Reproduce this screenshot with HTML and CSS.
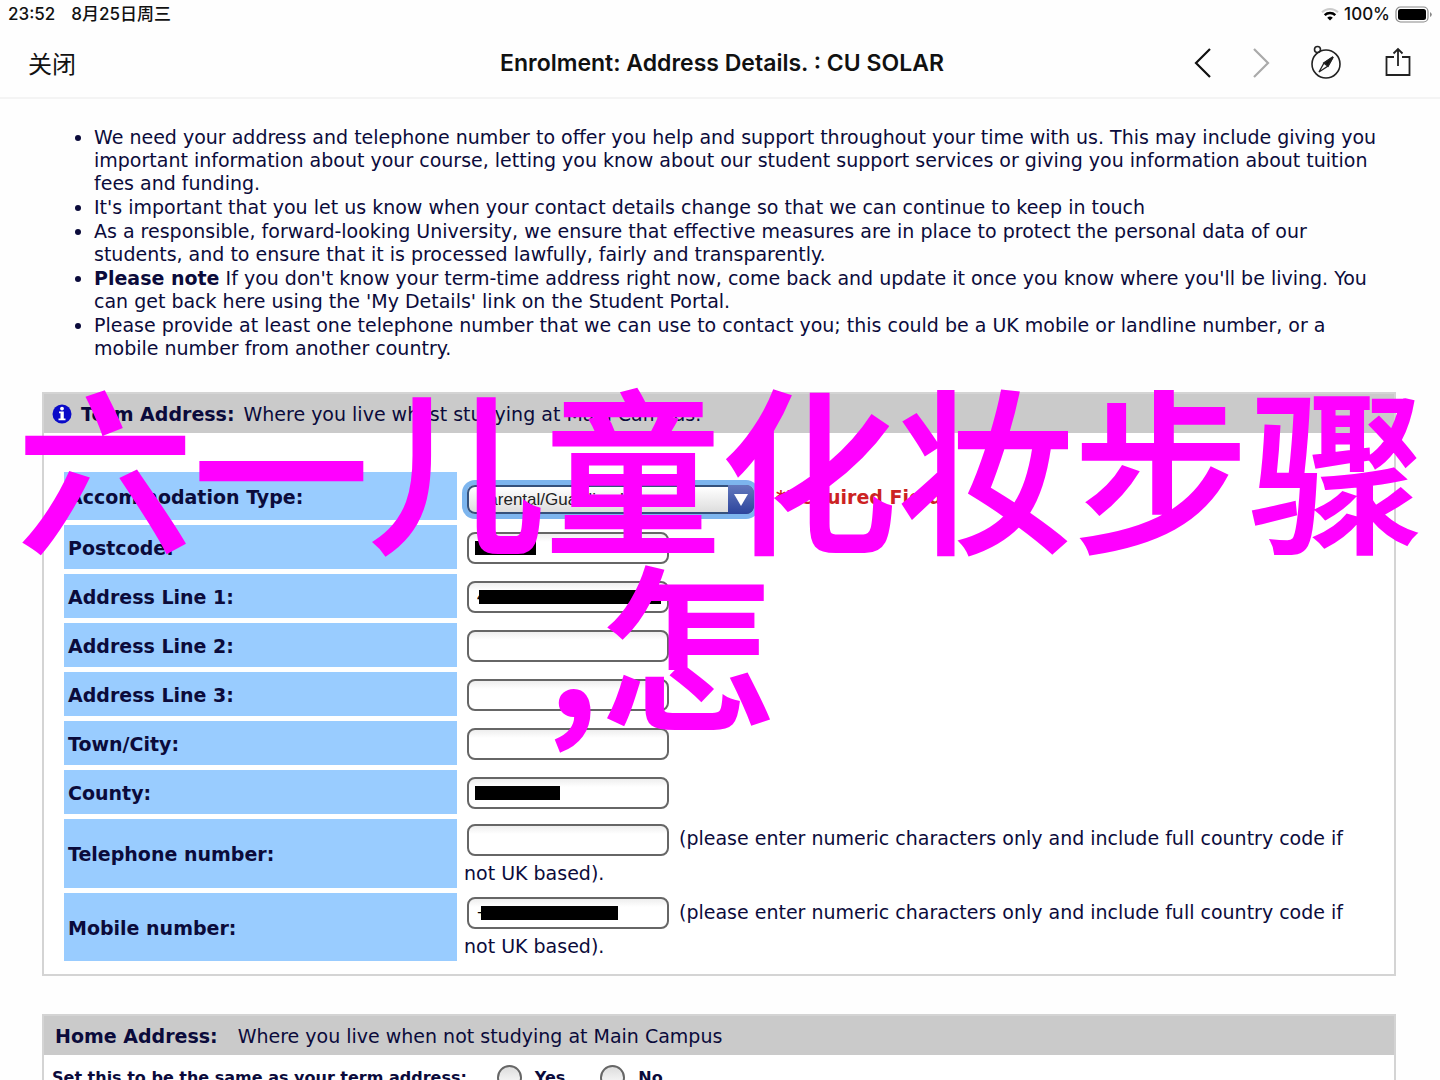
FILE: index.html
```html
<!DOCTYPE html>
<html lang="en">
<head>
  <meta charset="UTF-8">
  <title>Enrolment: Address Details. : CU SOLAR</title>
  <link rel="stylesheet" href="styles.css">
</head>
<body>
  <div class="status-bar">
    <div class="status-left" lang="zh"><span>23:52</span><span>8月25日周三</span></div>
    <div class="status-right">
      <svg width="18" height="14" viewBox="0 0 18 14" fill="none" stroke-width="2">
        <path d="M1 5.2a11.5 11.5 0 0 1 16 0" stroke="#ccc"/>
        <path d="M3.7 8.2a7.6 7.6 0 0 1 10.6 0" stroke="#000" stroke-width="2.4"/>
        <path d="M9 13.6l-2.8-2.8a4 4 0 0 1 5.6 0z" fill="#000"/>
      </svg>
      <span>100%</span>
      <svg width="37" height="17" viewBox="0 0 37 17">
        <rect x="1" y="1" width="32" height="15" rx="4.5" fill="none" stroke="#888" stroke-width="1.2"/>
        <rect x="3" y="3" width="28" height="11" rx="2.5"/>
        <path d="M35 6v5q1.8-1 1.8-2.5t-1.8-2.5z" fill="#888"/>
      </svg>
    </div>
  </div>

  <header class="nav-bar">
    <button class="close" lang="zh">关闭</button>
    <h1>Enrolment: Address Details. : CU SOLAR</h1>
    <div class="nav-icons">
      <button aria-label="Back">
        <svg width="22" height="36" viewBox="7 0 22 36" fill="none" stroke="#111" stroke-width="2.2"><path d="M25 4L11 18l14 14"/></svg>
      </button>
      <button aria-label="Forward">
        <svg width="22" height="36" viewBox="7 0 22 36" fill="none" stroke="#aaa" stroke-width="2.2"><path d="M11 4l14 14-14 14"/></svg>
      </button>
      <button aria-label="Open in browser">
        <svg width="36" height="36" viewBox="0 0 36 36" fill="none" stroke="#222" stroke-width="1.6">
          <circle cx="18" cy="19" r="14"/>
          <circle cx="9.5" cy="4.5" r="3"/>
          <path d="M25 12l-5 9-9 6 5-9z" stroke-width="1.3"/>
          <path d="M25 12l-5 9-4-3z" fill="#111"/>
        </svg>
      </button>
      <button aria-label="Share">
        <svg width="36" height="36" viewBox="0 0 36 36" fill="none" stroke="#222" stroke-width="1.8">
          <path d="M14 12H6.5v18h23V12H22M18 21V4M13.5 8.5L18 4l4.5 4.5"/>
        </svg>
      </button>
    </div>
  </header>

  <main>
    <ul class="notes">
      <li>We need your address and telephone number to offer you help and support throughout your time with us. This may include giving you important information about your course, letting you know about our student support services or giving you information about tuition fees and funding.</li>
      <li>It's important that you let us know when your contact details change so that we can continue to keep in touch</li>
      <li>As a responsible, forward-looking University, we ensure that effective measures are in place to protect the personal data of our students, and to ensure that it is processed lawfully, fairly and transparently.</li>
      <li><b>Please note</b> If you don't know your term-time address right now, come back and update it once you know where you'll be living. You can get back here using the 'My Details' link on the Student Portal.</li>
      <li>Please provide at least one telephone number that we can use to contact you; this could be a UK mobile or landline number, or a mobile number from another country.</li>
    </ul>

    <section class="panel">
      <h2 class="panel-title">
        <svg width="20" height="20" viewBox="0 0 20 20">
          <circle cx="10" cy="10" r="9.5" fill="#0a0ac8"/>
          <circle cx="10" cy="4.6" r="1.9" fill="#fff"/>
          <path d="M7 7.5h4.8v7h1.7v1.8h-7v-1.800h2V9.3H7z" fill="#fff"/>
        </svg>
        <b>Term Address:</b> <span>Where you live whilst studying at Main Campus.</span>
      </h2>
      <form class="fields">
        <label class="tall" for="accommodation">Accommodation Type:</label>
        <div class="field">
          <span class="select-wrap">
            <select id="accommodation"><option>Parental/Guardian Home</option></select>
            <span class="arrow"></span>
          </span>
          <span class="required">*Required Field</span>
        </div>
        <label for="postcode">Postcode:</label>
        <div class="field"><span class="box"><input type="text" id="postcode"><i class="mask mask-postcode"></i></span></div>
        <label for="address1">Address Line 1:</label>
        <div class="field"><span class="box"><input type="text" id="address1" value="4"><i class="mask mask-address"></i></span></div>
        <label for="address2">Address Line 2:</label>
        <div class="field"><span class="box"><input type="text" id="address2"></span></div>
        <label for="address3">Address Line 3:</label>
        <div class="field"><span class="box"><input type="text" id="address3"></span></div>
        <label for="town">Town/City:</label>
        <div class="field"><span class="box"><input type="text" id="town"></span></div>
        <label for="county">County:</label>
        <div class="field"><span class="box"><input type="text" id="county"><i class="mask mask-county"></i></span></div>
        <label for="telephone">Telephone number:</label>
        <div class="field"><p><span class="box"><input type="text" id="telephone"></span> (please enter numeric characters only and include full country code if not UK based).</p></div>
        <label for="mobile">Mobile number:</label>
        <div class="field"><p><span class="box"><input type="text" id="mobile" value="+"><i class="mask mask-mobile"></i></span> (please enter numeric characters only and include full country code if not UK based).</p></div>
      </form>
    </section>

    <section class="panel">
      <h2 class="panel-title home"><b>Home Address:</b> <span>Where you live when not studying at Main Campus</span></h2>
      <form class="same">
        <b>Set this to be the same as your term address:</b>
        <label><input type="radio" name="same"> Yes</label>
        <label><input type="radio" name="same"> No</label>
      </form>
    </section>
  </main>

  <div class="caption" lang="zh">
    <div>六一儿童化妆步骤</div>
    <div class="caption-end">,怎</div>
  </div>
</body>
</html>
```
FILE: styles.css
```css
* {
  box-sizing: border-box;
}
body {
  margin: 0;
  height: 100vh;
  overflow: hidden;
  position: relative;
  background: #fefefe;
  color: #0b0b3b;
  font-family: "DejaVu Sans", sans-serif;
  font-size: 19px;
}
button {
  padding: 0;
  border: 0;
  background: none;
  font: inherit;
  color: inherit;
  display: flex;
}
.status-bar {
  display: flex;
  justify-content: space-between;
  height: 28px;
  padding: 0 8px;
  color: #111;
  font-family: Inter, "Noto Sans CJK SC", sans-serif;
  font-size: 17px;
  font-weight: 500;
  line-height: 28px;
}
.status-left,
.status-right {
  display: flex;
  align-items: center;
}
.status-left {
  align-items: baseline;
  gap: 16px;
}
.status-right {
  gap: 5px;
}
.nav-bar {
  display: grid;
  grid-template-columns: 1fr auto 1fr;
  align-items: center;
  height: 71px;
  padding: 0 24px 0 28px;
  border-bottom: 2px solid #f4f4f4;
  color: #111;
  font-family: Inter, "Noto Sans CJK SC", sans-serif;
}
.nav-bar h1 {
  margin: 0;
  font-size: 23px;
  font-weight: 600;
}
.close {
  font-size: 24px;
}
.nav-icons {
  display: flex;
  justify-content: flex-end;
  gap: 36px;
}
main {
  padding: 27px 44px 0 42px;
}
.notes {
  margin: 0 0 32px;
  padding: 0 6px 0 52px;
  line-height: 23px;
}
.notes li {
  margin-bottom: 1px;
}
.panel {
  margin-bottom: 38px;
  border: 2px solid #d4d4d4;
  background: #fff;
}
.panel-title {
  display: flex;
  align-items: center;
  gap: 9px;
  height: 39px;
  margin: 0;
  padding: 0 8px;
  background: #cacaca;
  font-size: 19px;
  font-weight: normal;
}
.panel-title.home {
  gap: 20px;
  padding: 0 11px;
}
.fields {
  display: grid;
  grid-template-columns: 30% 1fr;
  grid-auto-rows: minmax(44px, auto);
  row-gap: 5px;
  padding: 39px 20px 13px;
}
.fields label {
  display: flex;
  align-items: center;
  padding: 2px 0 0 4px;
  background: #9cf;
  font-weight: bold;
}
.fields .tall {
  min-height: 48px;
}
.field {
  display: flex;
  align-items: center;
  padding: 2px 0 0 7px;
}
.field p {
  margin: 0 0 -2px;
  line-height: 34px;
}
.box {
  display: inline-flex;
  position: relative;
  vertical-align: middle;
  margin: 0 4px 0 3px;
}
.box input {
  width: 202px;
  height: 32px;
  padding: 0 8px;
  border: 2px solid #666;
  border-radius: 8px;
  background: linear-gradient(#eee, #fff 8px);
  font-family: "Liberation Sans", sans-serif;
  font-size: 17px;
}
.mask {
  position: absolute;
  top: 9px;
  left: 8px;
  height: 14px;
  background: #000;
}
.mask-postcode {
  width: 61px;
}
.mask-address {
  left: 12px;
  width: 182px;
}
.mask-county {
  width: 85px;
}
.mask-mobile {
  left: 14px;
  width: 137px;
}
.select-wrap {
  display: flex;
  position: relative;
  margin: 4px 22px 0 3px;
  border-radius: 8px;
  box-shadow: 0 0 0 5px #7db5ee;
}
.select-wrap select {
  appearance: none;
  width: 287px;
  height: 29px;
  padding: 0 8px;
  border: 2px solid #35517c;
  border-radius: 8px;
  background: linear-gradient(#fff, #ddd);
  color: #222;
  font-family: "Liberation Sans", sans-serif;
  font-size: 17px;
}
.arrow {
  position: absolute;
  top: 0;
  right: 0;
  width: 26px;
  height: 29px;
  border-radius: 0 8px 8px 0;
  background: linear-gradient(#6479bd, #2c449c);
  pointer-events: none;
}
.arrow::after {
  content: "";
  position: absolute;
  top: 9px;
  left: 6px;
  border: 7px solid transparent;
  border-top: 12px solid #fff;
  border-bottom: 0;
}
.required {
  color: #c22;
  font-weight: bold;
}
.same {
  display: flex;
  align-items: center;
  height: 44px;
  padding-left: 8px;
  font-size: 16px;
  font-weight: bold;
}
.same label {
  display: flex;
  align-items: center;
  gap: 13px;
  margin-left: 30px;
}
.same label + label {
  margin-left: 35px;
}
.same input {
  appearance: none;
  width: 25px;
  height: 25px;
  margin: 0;
  border: 2px solid #666;
  border-radius: 50%;
  background: linear-gradient(#ddd, #fff);
}
.caption {
  position: absolute;
  top: 376px;
  left: 2px;
  right: 0;
  color: #f0f;
  font-family: "Noto Sans CJK SC", sans-serif;
  font-size: 176px;
  font-weight: 500;
  line-height: 176px;
  text-align: center;
  white-space: nowrap;
  pointer-events: none;
  -webkit-text-stroke: 2px #f0f;
}
.caption-end {
  padding-right: 120px;
}
```
